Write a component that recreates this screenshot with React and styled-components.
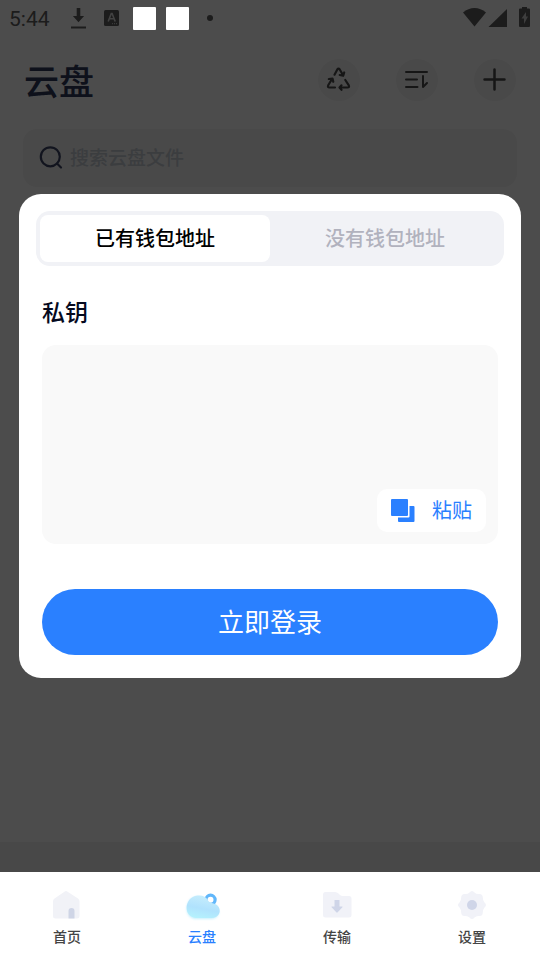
import React, { useState } from 'react';
import styled, { createGlobalStyle } from 'styled-components';

const GlobalStyle = createGlobalStyle`
  * {
    box-sizing: border-box;
  }
  body {
    margin: 0;
    background: #fff;
    font-family: Roboto, "Noto Sans CJK SC", sans-serif;
  }
  button, input, textarea {
    font-family: inherit;
    border: 0;
    padding: 0;
    margin: 0;
    outline: none;
  }
  button {
    cursor: pointer;
  }
  svg {
    display: block;
  }
`;

const Page = styled.div`
  display: flex;
  flex-direction: column;
  min-height: 100vh;
`;

const Screen = styled.div`
  position: relative;
  flex: 1;
  display: flex;
  flex-direction: column;
`;

const StatusBar = styled.div`
  display: flex;
  align-items: center;
  justify-content: space-between;
  height: 36px;
  padding: 0 9px;
  color: #5e5e5e;
`;

const StatusGroup = styled.div`
  display: flex;
  align-items: center;
`;

const Clock = styled.span`
  margin-right: 20px;
  padding-top: 2px;
  font-size: 21px;
  line-height: 34px;
  color: #5e5e5e;
`;

const Notice = styled.span`
  position: relative;
  z-index: 2;
  width: 23px;
  height: 23px;
  margin-left: ${props => props.$gap}px;
  border-radius: 1px;
  background: #fff;
`;

const Dot = styled.span`
  width: 6px;
  height: 6px;
  margin-left: 18px;
  border-radius: 50%;
  background: #5e5e5e;
`;

const Header = styled.header`
  display: flex;
  align-items: center;
  justify-content: space-between;
  height: 88px;
  padding: 0 24px;
`;

const Title = styled.h1`
  margin: 0;
  padding-top: 8px;
  font-size: 35px;
  line-height: 44px;
  font-weight: 500;
  color: #303a5c;
`;

const Actions = styled.div`
  display: flex;
  gap: 36px;
`;

const RoundButton = styled.button`
  display: flex;
  align-items: center;
  justify-content: center;
  width: 42px;
  height: 42px;
  border-radius: 50%;
  background: #f5f5f5;
  color: #4a4a4a;
`;

const SearchBox = styled.label`
  display: flex;
  align-items: center;
  gap: 7px;
  height: 58px;
  margin: 5px 23px 0;
  padding: 0 16px;
  border-radius: 14px;
  background: #f5f5f5;
`;

const SearchInput = styled.input`
  flex: 1;
  min-width: 0;
  padding-top: 2px;
  background: transparent;
  font-size: 19px;
  line-height: 28px;
  font-weight: 500;
  &::placeholder {
    color: #c6ccd4;
    opacity: 1;
  }
`;

const BottomBand = styled.div`
  height: 30px;
  margin-top: auto;
  background: #f2f2f2;
`;

const Overlay = styled.div`
  position: absolute;
  inset: 0;
  z-index: 1;
  display: flex;
  align-items: center;
  padding: 0 19px;
  background: rgba(0, 0, 0, 0.7);
`;

const Dialog = styled.section`
  flex: 1;
  padding: 17px;
  border-radius: 22px;
  background: #fff;
`;

const Tabs = styled.div`
  display: flex;
  height: 55px;
  padding: 4px;
  border-radius: 14px;
  background: #f1f2f6;
`;

const Tab = styled.button`
  flex: 1;
  border-radius: 8px;
  font-size: 20px;
  line-height: 28px;
  font-weight: 500;
  background: ${props => props.$active ? '#fff' : 'transparent'};
  color: ${props => props.$active ? '#000' : '#b1b2be'};
`;

const Form = styled.form`
  padding: 30px 6px 6px;
`;

const Label = styled.label`
  display: block;
  margin-bottom: 13px;
  font-size: 23px;
  line-height: 36px;
  font-weight: 500;
  color: #050a1e;
`;

const KeyBox = styled.div`
  position: relative;
  margin-bottom: 45px;
`;

const KeyInput = styled.textarea`
  display: block;
  width: 100%;
  height: 199px;
  padding: 14px;
  border-radius: 14px;
  background: #f9f9f9;
  font-size: 20px;
  resize: none;
`;

const PasteButton = styled.button`
  position: absolute;
  right: 12px;
  bottom: 12px;
  display: flex;
  align-items: center;
  gap: 17px;
  height: 43px;
  padding: 0 14px;
  border-radius: 10px;
  background: #fff;
  color: #2a80ff;
  font-size: 20px;
  line-height: 28px;
`;

const LoginButton = styled.button`
  display: block;
  width: 100%;
  height: 66px;
  padding-top: 2px;
  border-radius: 33px;
  background: #2a80ff;
  color: #fff;
  font-size: 26px;
  line-height: 36px;
`;

const NavBar = styled.nav`
  display: flex;
  height: 88px;
  background: #fff;
`;

const NavItem = styled.button`
  flex: 1;
  display: flex;
  flex-direction: column;
  align-items: center;
  gap: 2px;
  padding: 13px 1px 0 0;
  background: transparent;
  font-size: 14px;
  line-height: 20px;
  font-weight: 500;
  color: ${props => props.$active ? '#2a80ff' : '#444'};
`;

const DownloadIcon = () => (
  <svg width="17" height="22" viewBox="0 0 17 22">
    <path d="M6.700 1h3.600v8h3.800l-5.600 6.200L2.900 9h3.800z" fill="currentColor" />
    <path d="M1 20.500h15" stroke="currentColor" strokeWidth="2" />
  </svg>
);

const LetterIcon = () => (
  <svg width="49" height="16" viewBox="0 0 49 16">
    <rect x="17" y="0" width="15" height="16" rx="1.500" fill="currentColor" />
    <path d="M21.200 11.500l3.100-8h.8l3.100 8M22.400 8.800h4.600" fill="none" stroke="#ddd" strokeWidth="1.600" />
    <path d="M25 13.700h6" stroke="#ddd" strokeDasharray="1 1" />
  </svg>
);

const SignalIcons = () => (
  <svg width="68" height="22" viewBox="0 0 68 22">
    <path d="M0 5.500C3.400 2.500 7.300 1 11.500 1S19.600 2.500 23 5.500L11.500 19.500z" fill="currentColor" />
    <path d="M25.500 20L44 2v18z" fill="currentColor" />
    <path d="M57 1.500h2V0h5v1.500h2q1 0 1 1V19q0 1-1 1h-9q-1 0-1-1V2.500q0-1 1-1z" fill="currentColor" />
    <path d="M63 5l-4.500 6.500h2.500V17l4-7.500h-2z" fill="#cfcfcf" />
  </svg>
);

const RecycleIcon = () => (
  <svg width="26" height="26" viewBox="0 0 26 26" fill="none" stroke="currentColor" strokeWidth="2.200" strokeLinecap="round" strokeLinejoin="round">
    <path d="M8.500 7.700L11.300 2.500Q12.500 .8 13.700 2.500L17 8M13.700 8L17.200 8.800 18.200 5.500" />
    <path d="M19.300 13L22.800 18.300Q23.700 20.500 21.500 20.500H14M15.500 18.300L13.500 20.500 15.500 22.800" />
    <path d="M9 20.500H3.500Q1.300 20.500 2.200 18.300L6 12M2.800 12L6.500 11.500 7.300 14.800" />
  </svg>
);

const SortIcon = () => (
  <svg width="24" height="20" viewBox="0 0 24 20" fill="none" stroke="currentColor" strokeWidth="2" strokeLinecap="round" strokeLinejoin="round">
    <path d="M1 2h21M1 9.500h11M1 17h11.500M18 6v11l4-4" />
  </svg>
);

const PlusIcon = () => (
  <svg width="24" height="24" viewBox="0 0 24 24" stroke="currentColor" strokeWidth="2.500" strokeLinecap="round">
    <path d="M11.500 1.500v20M1.500 11.500h20" />
  </svg>
);

const SearchIcon = () => (
  <svg width="24" height="24" viewBox="0 0 24 24" fill="none" stroke="#3c4566" strokeWidth="2.200">
    <circle cx="11.300" cy="10.800" r="9.500" />
    <path d="M18 17.500l4 4" strokeLinecap="round" />
  </svg>
);

const PasteIcon = () => (
  <svg width="24" height="24" viewBox="0 0 24 24" fill="currentColor">
    <rect x="0" y="0" width="17" height="17" rx="1" />
    <path d="M18.500 7H22.500q1 0 1 1v14q0 1-1 1H8q-1 0-1-1v-3.500h10.500q1 0 1-1z" />
  </svg>
);

const HomeIcon = () => (
  <svg width="40" height="40" viewBox="0 0 40 40">
    <path d="M17.800 6.500q1.200-.8 2.400 0L31 13.500q1.500 1 1.500 3V31q0 2.500-2.500 2.500H8.500Q6 33.500 6 31V16.500q0-2 1.500-3z" fill="#f1f2f7" />
    <path d="M21.500 33.500v-7.500q0-3 3-3t3 3v7.500z" fill="#cfd5e6" />
  </svg>
);

const CloudIcon = () => (
  <svg width="40" height="40" viewBox="0 0 40 40">
    <defs>
      <linearGradient id="cloud" x1="0.700" y1="0" x2="0.400" y2="1">
        <stop offset="0" stopColor="#c8eefc" />
        <stop offset="0.600" stopColor="#b0e2fd" />
        <stop offset="1" stopColor="#b4f1fd" />
      </linearGradient>
      <filter id="glow" x="-20%" y="-20%" width="140%" height="150%">
        <feGaussianBlur stdDeviation="1.300" />
      </filter>
    </defs>
    <circle cx="28.500" cy="14.800" r="4.600" fill="#fff" stroke="#61b7fb" strokeWidth="3.200" />
    <path d="M14 34C1 33.500 2 13 14.500 11.500c6-.5 8 2.500 11 6.500q2 1.500 5 2c9 2 8 13.500-1 14z" fill="#aeeafd" opacity="0.700" filter="url(#glow)" />
    <path d="M14 33C.5 32 2 12 15.500 10.500c5-.5 8.500 1 10.500 5q1.500 2.500 4.500 2.700c10 1.500 9.500 14.300-.500 14.800z" fill="url(#cloud)" />
  </svg>
);

const TransferIcon = () => (
  <svg width="40" height="40" viewBox="0 0 40 40">
    <path d="M8 7h10q2 0 3.500 1.500l1.500 1.500q1 1 3 1h6q2.500 0 2.500 2.500V30q0 2.500-2.500 2.500H8.500Q6 32.500 6 30V9.500Q6 7 8 7z" fill="#f1f2f8" />
    <path d="M17.500 15h5v6.500h2.500q1 0 .4.800l-4.700 5q-.7.700-1.400 0l-4.700-5q-.6-.8.400-.8h2.500z" fill="#cfd5e8" />
  </svg>
);

const SettingsIcon = () => (
  <svg width="40" height="40" viewBox="0 0 40 40">
    <path d="M17.500 7.500Q20 4.500 22.500 7.500 24.500 9.500 27 9 30.700 8.700 30.800 12.500 30.700 15.200 32.500 17.500 35.500 20 32.500 22.500 30.700 24.800 30.800 27.500 30.700 31.300 27 31 24.500 30.500 22.500 32.500 20 35.500 17.500 32.500 15.500 30.500 13 31 9.300 31.300 9.200 27.500 9.300 24.800 7.500 22.500 4.500 20 7.500 17.500 9.300 15.200 9.200 12.500 9.300 8.700 13 9 15.500 9.500 17.500 7.500z" fill="#f1f2f8" />
    <circle cx="20" cy="20" r="5" fill="#cfd5e8" />
  </svg>
);

const navItems = [
  { name: '首页', Icon: HomeIcon },
  { name: '云盘', Icon: CloudIcon },
  { name: '传输', Icon: TransferIcon },
  { name: '设置', Icon: SettingsIcon },
];

const walletTabs = ['已有钱包地址', '没有钱包地址'];

const App = () => {
  const [tab, setTab] = useState(0);
  const [page, setPage] = useState('云盘');
  const [privateKey, setPrivateKey] = useState('');

  const paste = async () => {
    setPrivateKey(await navigator.clipboard.readText());
  };

  return (
    <Page lang="zh-CN">
      <GlobalStyle />
      <Screen>
        <StatusBar>
          <StatusGroup>
            <Clock>5:44</Clock>
            <DownloadIcon />
            <LetterIcon />
            <Notice $gap={-3} />
            <Notice $gap={10} />
            <Dot />
          </StatusGroup>
          <SignalIcons />
        </StatusBar>
        <Header>
          <Title>云盘</Title>
          <Actions>
            <RoundButton aria-label="回收站"><RecycleIcon /></RoundButton>
            <RoundButton aria-label="排序"><SortIcon /></RoundButton>
            <RoundButton aria-label="新建"><PlusIcon /></RoundButton>
          </Actions>
        </Header>
        <SearchBox>
          <SearchIcon />
          <SearchInput type="text" placeholder="搜索云盘文件" />
        </SearchBox>
        <BottomBand />
        <Overlay>
          <Dialog role="dialog">
            <Tabs role="tablist">
              {walletTabs.map((name, i) => (
                <Tab key={name} role="tab" aria-selected={tab === i} $active={tab === i} onClick={() => setTab(i)}>
                  {name}
                </Tab>
              ))}
            </Tabs>
            <Form onSubmit={e => e.preventDefault()}>
              <Label htmlFor="privateKey">私钥</Label>
              <KeyBox>
                <KeyInput id="privateKey" value={privateKey} onChange={e => setPrivateKey(e.target.value)} />
                <PasteButton type="button" onClick={paste}>
                  <PasteIcon />
                  粘贴
                </PasteButton>
              </KeyBox>
              <LoginButton type="submit">立即登录</LoginButton>
            </Form>
          </Dialog>
        </Overlay>
      </Screen>
      <NavBar>
        {navItems.map(({ name, Icon }) => (
          <NavItem key={name} $active={page === name} onClick={() => setPage(name)}>
            <Icon />
            {name}
          </NavItem>
        ))}
      </NavBar>
    </Page>
  );
};

export default App;
